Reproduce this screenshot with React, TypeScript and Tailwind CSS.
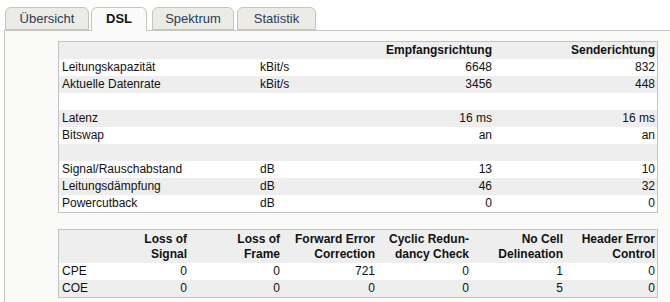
const tabs = [
  { label: 'Übersicht', w: 'w-[84px]', ml: 'ml-[5px]', active: false },
  { label: 'DSL', w: 'w-[56px]', ml: 'ml-[2px]', active: true },
  { label: 'Spektrum', w: 'w-[82px]', ml: 'ml-[5px]', active: false },
  { label: 'Statistik', w: 'w-[79px]', ml: 'ml-[3px]', active: false },
]

const rows: [string, string, string, string][] = [
  ['Leitungskapazität', 'kBit/s', '6648', '832'],
  ['Aktuelle Datenrate', 'kBit/s', '3456', '448'],
  ['', '', '', ''],
  ['Latenz', '', '16 ms', '16 ms'],
  ['Bitswap', '', 'an', 'an'],
  ['', '', '', ''],
  ['Signal/Rauschabstand', 'dB', '13', '10'],
  ['Leitungsdämpfung', 'dB', '46', '32'],
  ['Powercutback', 'dB', '0', '0'],
]

const errHead = [
  ['Loss of', 'Signal'],
  ['Loss of', 'Frame'],
  ['Forward Error', 'Correction'],
  ['Cyclic Redun-', 'dancy Check'],
  ['No Cell', 'Delineation'],
  ['Header Error', 'Control'],
]

const errRows: [string, number[]][] = [
  ['CPE', [0, 0, 721, 0, 1, 0]],
  ['COE', [0, 0, 0, 0, 5, 0]],
]

const grid1 = 'grid grid-cols-[199px_75px_162px_162px]'
const grid2 = 'grid grid-cols-[37px_94px_93px_95px_94px_94px_91px]'

export default function App() {
  return (
    <div className="w-[670px] h-[302px] overflow-hidden bg-white font-['Liberation_Sans',Arial,sans-serif] text-[12px] text-[#111]">
      <div className="flex items-end h-[30px] pt-[7px]">
        {tabs.map((t) => (
          <div
            key={t.label}
            className={`${t.w} ${t.ml} rounded-t-[6px] border border-[#c6c5bd] text-center text-[13px] leading-[21px] ${
              t.active
                ? 'h-[24px] -mb-px border-b-0 bg-[#fafaf9] font-bold text-[#111] relative z-10'
                : 'h-[23px] bg-[#ecebe5] text-[#2a3d5e]'
            }`}
          >
            {t.label}
          </div>
        ))}
      </div>
      <div className="ml-[4px] h-[272px] border-l border-t border-[#c6c5bd] bg-[#fafaf9] pl-[53px] pt-[10px]">
        <div className="w-[600px] border border-[#c2c2c2] leading-[17px]">
          <div className={`${grid1} bg-[#eeeeee] font-bold h-[17px]`}>
            <div />
            <div />
            <div className="text-right pr-[3px]">Empfangsrichtung</div>
            <div className="text-right pr-[2px]">Senderichtung</div>
          </div>
          {rows.map((r, i) => (
            <div key={i} className={`${grid1} h-[17px] ${i % 2 === 0 ? 'bg-white' : 'bg-[#eeeeee]'}`}>
              <div className="pl-[3px]">{r[0]}</div>
              <div className="pl-[2px]">{r[1]}</div>
              <div className="text-right pr-[3px]">{r[2]}</div>
              <div className="text-right pr-[2px]">{r[3]}</div>
            </div>
          ))}
        </div>

        <div className="mt-[16px] w-[600px] border border-[#c2c2c2] leading-[17px]">
          <div className={`${grid2} bg-[#eeeeee] font-bold h-[33px] items-center leading-[15px]`}>
            <div />
            {errHead.map((h, i) => (
              <div key={i} className={`text-right ${i === 5 ? 'pr-[2px]' : 'pr-[3px]'}`}>
                {h[0]}
                <br />
                {h[1]}
              </div>
            ))}
          </div>
          {errRows.map(([name, vals], i) => (
            <div key={name} className={`${grid2} h-[17px] ${i % 2 === 0 ? 'bg-white' : 'bg-[#eeeeee]'}`}>
              <div className="pl-[3px]">{name}</div>
              {vals.map((v, j) => (
                <div key={j} className={`text-right ${j === 5 ? 'pr-[2px]' : 'pr-[3px]'}`}>
                  {v}
                </div>
              ))}
            </div>
          ))}
        </div>
      </div>
    </div>
  )
}
